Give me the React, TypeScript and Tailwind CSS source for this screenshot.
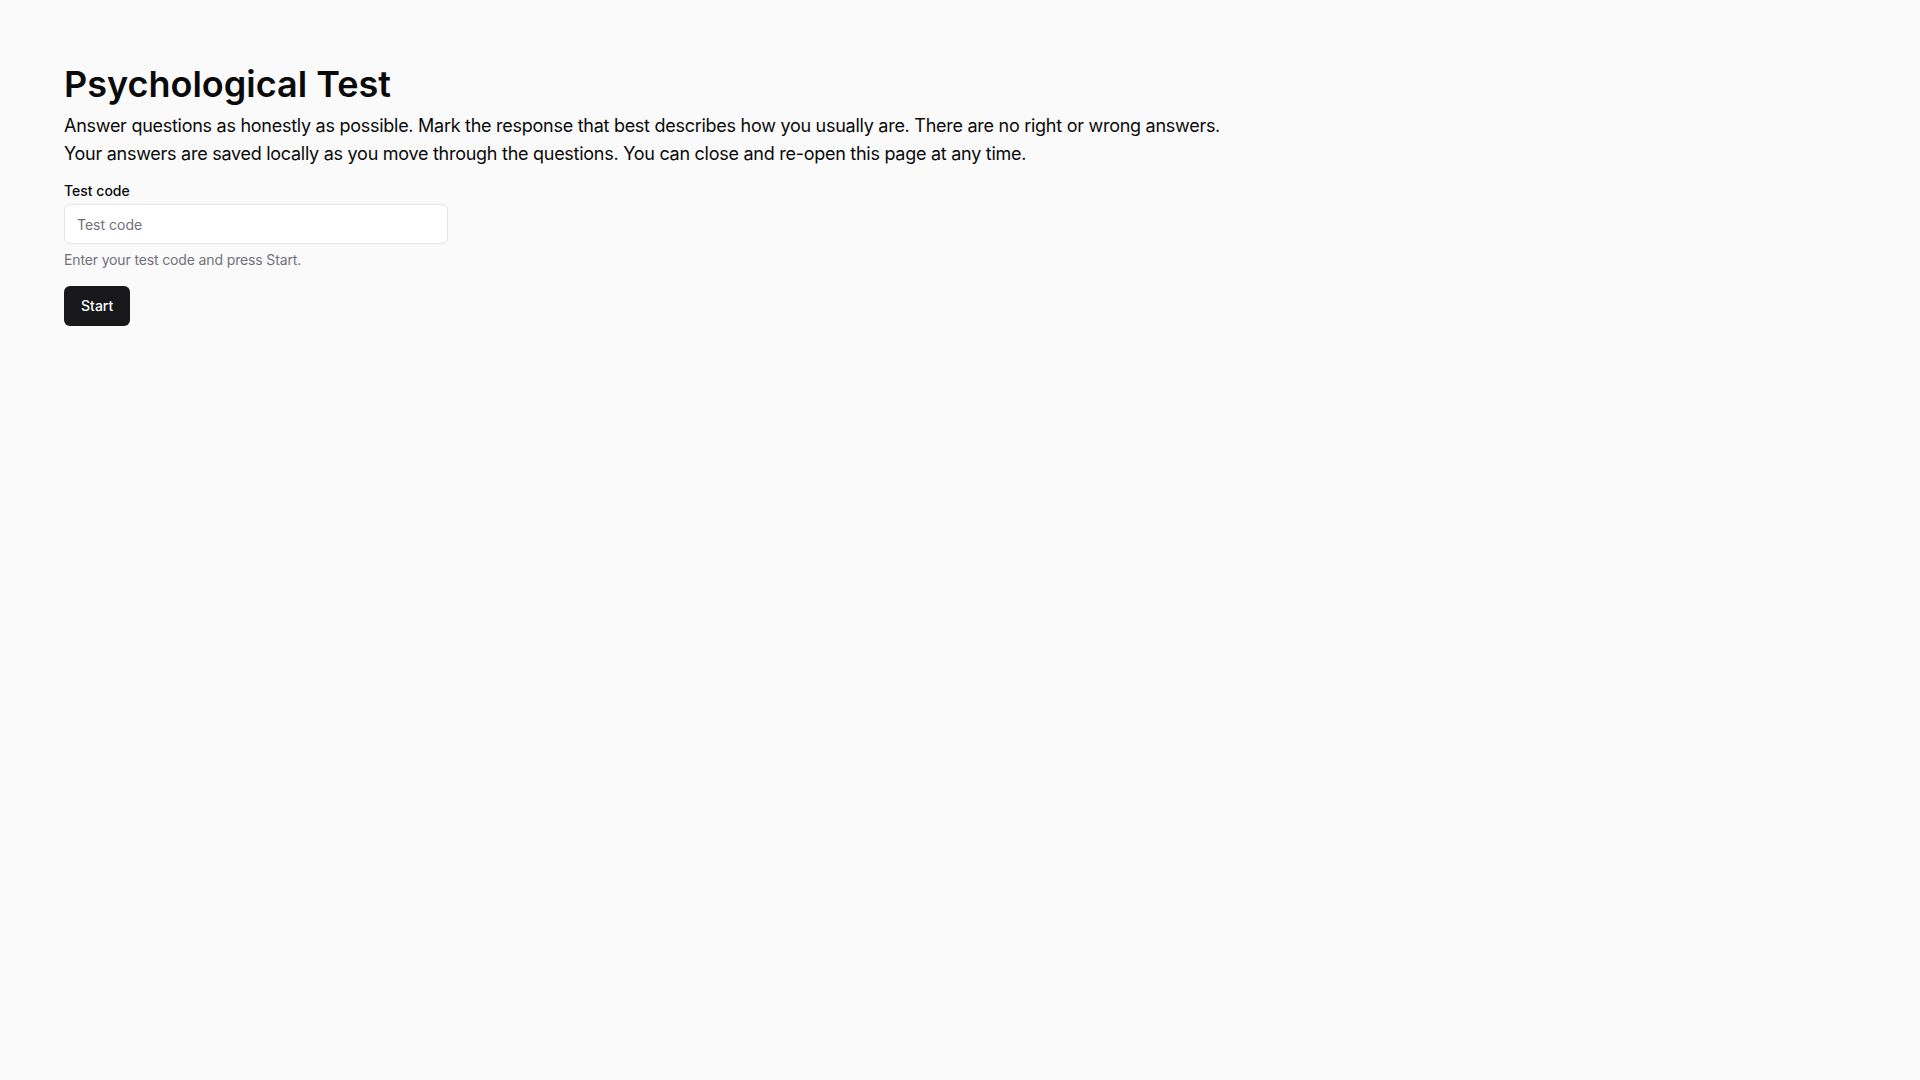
export default function App() {
  return (
    <div
      className="min-h-screen bg-[#fafafa] p-16 text-[#0a0a0a]"
      style={{ fontFamily: "Inter, 'Noto Sans', sans-serif" }}
    >
      <h1 className="mb-2 text-4xl font-semibold">Psychological Test</h1>
      <p className="text-lg tracking-[-0.015em]">
        Answer questions as honestly as possible. Mark the response that best describes how you
        usually are. There are no right or wrong answers.
      </p>
      <p className="text-lg tracking-[-0.015em]">
        Your answers are saved locally as you move through the questions. You can close and
        re-open this page at any time.
      </p>

      <form className="mt-3 w-96" onSubmit={(e) => e.preventDefault()}>
        <label htmlFor="code" className="block pt-px text-sm font-medium">
          Test code
        </label>
        <input
          id="code"
          name="code"
          placeholder="Test code"
          className="mt-[3px] h-10 w-full rounded-md border border-[#e4e4e7] bg-white px-3 text-sm outline-none placeholder:text-[#71717a]"
        />
        <p className="mt-1.5 text-sm tracking-[-0.01em] text-[#71717a]">
          Enter your test code and press Start.
        </p>
        <button
          type="submit"
          className="mt-4 h-10 rounded-md bg-[#18181b] px-[17px] text-sm font-medium text-white"
        >
          Start
        </button>
      </form>
    </div>
  );
}
